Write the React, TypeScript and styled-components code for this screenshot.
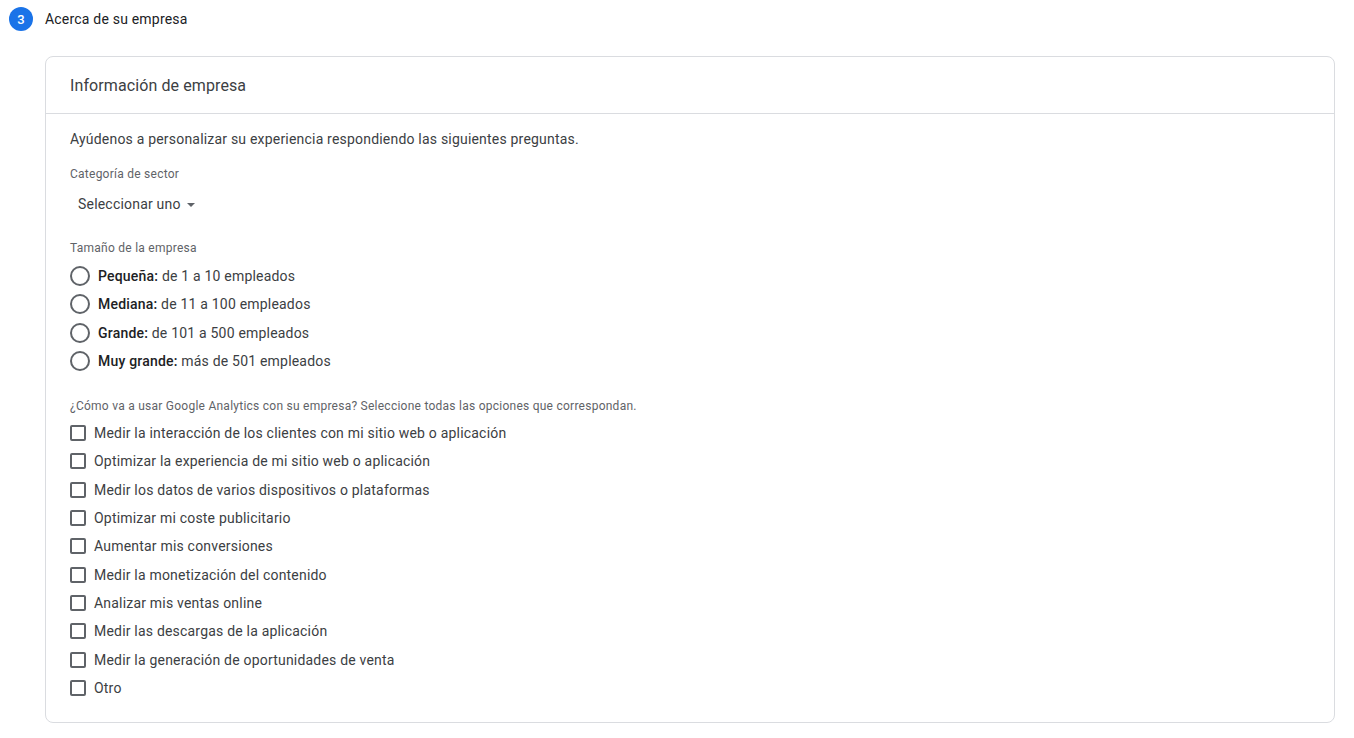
import React from "react";
import styled, { createGlobalStyle } from "styled-components";

const Global = createGlobalStyle`
  html, body { margin: 0; padding: 0; background: #fff; }
  body { font-family: Roboto, "Noto Sans", Arial, sans-serif; color: #202124; }
`;

const Page = styled.div`
  padding: 7px 20px 0 9px;
`;

const StepHeader = styled.div`
  display: flex;
  align-items: center;
  gap: 12px;
  height: 24px;
`;

const StepNumber = styled.div`
  width: 24px;
  height: 24px;
  border-radius: 50%;
  background: #1a73e8;
  color: #fff;
  font-size: 13px;
  font-weight: 500;
  display: flex;
  align-items: center;
  justify-content: center;
`;

const StepTitle = styled.div`
  font-size: 14px;
  font-weight: 400;
  color: #202124;
  letter-spacing: 0.2px;
`;

const Card = styled.section`
  margin: 25px 0 0 36px;
  border: 1px solid #dadce0;
  border-radius: 8px;
  width: 1290px;
  box-sizing: border-box;
`;

const CardHeader = styled.div`
  height: 57px;
  box-sizing: border-box;
  padding: 0 24px;
  display: flex;
  align-items: center;
  border-bottom: 1px solid #dadce0;
  font-size: 16px;
  color: #3c4043;
  letter-spacing: 0.1px;
`;

const CardBody = styled.div`
  padding: 15px 24px 24px;
`;

const Intro = styled.p`
  margin: 0;
  font-size: 14px;
  line-height: 20px;
  color: #3c4043;
  letter-spacing: 0.2px;
`;

const FieldLabel = styled.div<{ $top: number }>`
  margin-top: ${(p) => p.$top}px;
  font-size: 12px;
  line-height: 16px;
  color: #5f6368;
  letter-spacing: 0.25px;
`;

const SelectButton = styled.div`
  display: inline-flex;
  align-items: center;
  gap: 6px;
  margin: 12px 0 0 8px;
  font-size: 14px;
  line-height: 20px;
  color: #3c4043;
  letter-spacing: 0.2px;
`;

const Caret = styled.span`
  width: 0;
  height: 0;
  border-left: 4px solid transparent;
  border-right: 4px solid transparent;
  border-top: 4px solid #5f6368;
  margin-top: 1px;
`;

const OptionList = styled.div<{ $top: number }>`
  display: flex;
  flex-direction: column;
  gap: 8.33px;
  margin-top: ${(p) => p.$top}px;
`;

const RadioRow = styled.label`
  display: flex;
  align-items: center;
  gap: 8px;
  height: 20px;
  font-size: 14px;
  color: #3c4043;
  letter-spacing: 0.2px;
`;

const RadioCircle = styled.span`
  width: 20px;
  height: 20px;
  border: 2px solid #5f6368;
  border-radius: 50%;
  box-sizing: border-box;
  flex: none;
`;

const Bold = styled.b`
  font-weight: 500;
  color: #202124;
`;

const CheckRow = styled.label`
  display: flex;
  align-items: center;
  gap: 8px;
  height: 20px;
  font-size: 14px;
  color: #3c4043;
  letter-spacing: 0.2px;
`;

const CheckBox = styled.span`
  width: 16px;
  height: 16px;
  border: 2px solid #5f6368;
  border-radius: 2px;
  box-sizing: border-box;
  flex: none;
`;

const sizes = [
  ["Pequeña:", "de 1 a 10 empleados"],
  ["Mediana:", "de 11 a 100 empleados"],
  ["Grande:", "de 101 a 500 empleados"],
  ["Muy grande:", "más de 501 empleados"],
];

const uses = [
  "Medir la interacción de los clientes con mi sitio web o aplicación",
  "Optimizar la experiencia de mi sitio web o aplicación",
  "Medir los datos de varios dispositivos o plataformas",
  "Optimizar mi coste publicitario",
  "Aumentar mis conversiones",
  "Medir la monetización del contenido",
  "Analizar mis ventas online",
  "Medir las descargas de la aplicación",
  "Medir la generación de oportunidades de venta",
  "Otro",
];

export default function App() {
  return (
    <>
      <Global />
      <Page>
        <StepHeader>
          <StepNumber>3</StepNumber>
          <StepTitle>Acerca de su empresa</StepTitle>
        </StepHeader>
        <Card>
          <CardHeader>Información de empresa</CardHeader>
          <CardBody>
            <Intro>Ayúdenos a personalizar su experiencia respondiendo las siguientes preguntas.</Intro>
            <FieldLabel $top={17}>Categoría de sector</FieldLabel>
            <SelectButton>
              Seleccionar uno <Caret />
            </SelectButton>
            <FieldLabel $top={26}>Tamaño de la empresa</FieldLabel>
            <OptionList $top={10}>
              {sizes.map(([b, t]) => (
                <RadioRow key={b}>
                  <RadioCircle />
                  <span>
                    <Bold>{b}</Bold> {t}
                  </span>
                </RadioRow>
              ))}
            </OptionList>
            <FieldLabel $top={27}>
              ¿Cómo va a usar Google Analytics con su empresa? Seleccione todas las opciones que correspondan.
            </FieldLabel>
            <OptionList $top={9}>
              {uses.map((u) => (
                <CheckRow key={u}>
                  <CheckBox />
                  <span>{u}</span>
                </CheckRow>
              ))}
            </OptionList>
          </CardBody>
        </Card>
      </Page>
    </>
  );
}
